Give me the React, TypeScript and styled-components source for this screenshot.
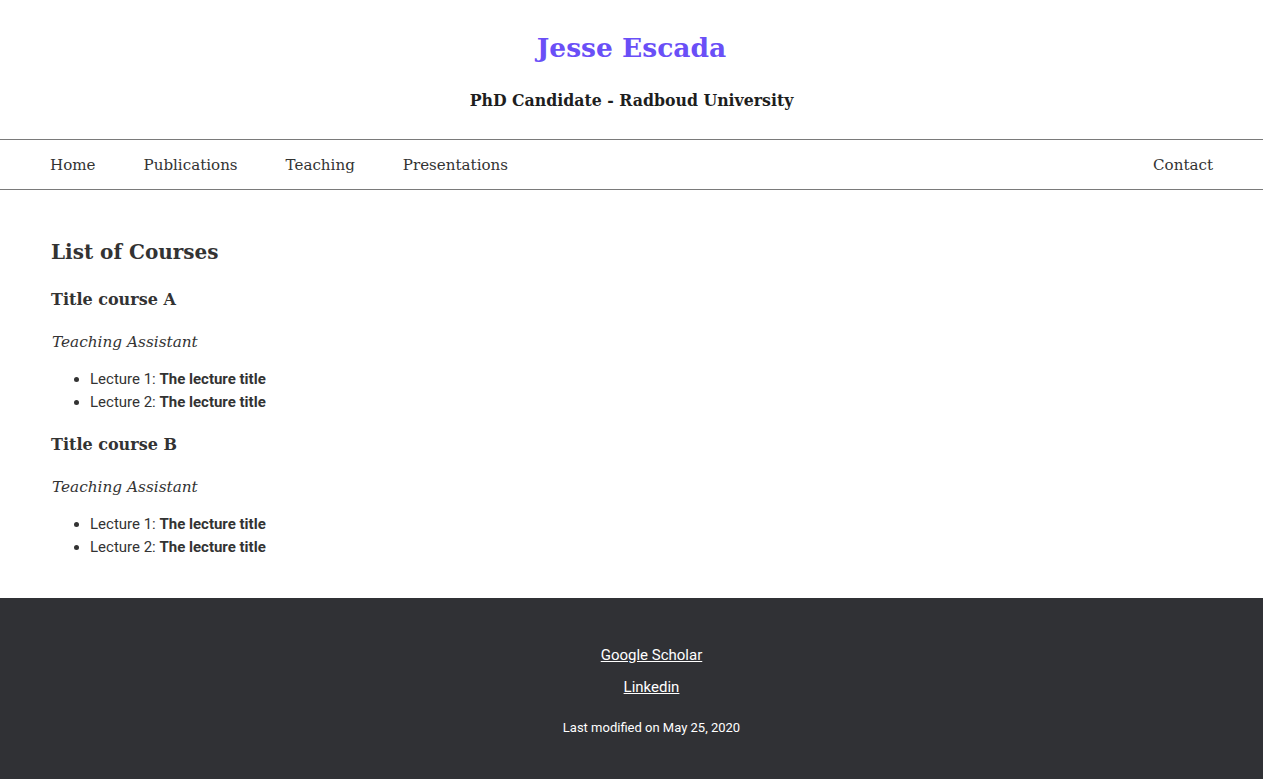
import React from "react";
import styled, { createGlobalStyle } from "styled-components";

const Global = createGlobalStyle`
  html, body { margin: 0; padding: 0; background: #fff; }
  body { font-family: Roboto, "Liberation Sans", sans-serif; color: #333; }
`;

const slab = `"DejaVu Serif", "Liberation Serif", serif`;

const Header = styled.header`
  display: flex;
  flex-direction: column;
  align-items: center;
  padding-top: 30px;
  padding-bottom: 26px;
`;

const Name = styled.h1`
  margin: 0;
  font-family: ${slab};
  font-weight: 700;
  font-size: 26.5px;
  line-height: 36px;
  color: #6a4ff7;
`;

const Subtitle = styled.h2`
  margin: 23px 0 0;
  font-family: ${slab};
  font-weight: 700;
  font-size: 15.75px;
  line-height: 24px;
  color: #1e1e1e;
`;

const Nav = styled.nav`
  display: flex;
  align-items: center;
  height: 49px;
  border-top: 1px solid #7a7a7a;
  border-bottom: 1px solid #7a7a7a;
  padding: 0 50px;
`;

const NavLink = styled.a`
  font-family: ${slab};
  font-size: 15.1px;
  color: #333;
  text-decoration: none;
  margin-right: 48px;
  &:last-child { margin-right: 0; margin-left: auto; }
`;

const Main = styled.main`
  padding: 48px 51px 19px;
`;

const PageTitle = styled.h2`
  margin: 0 0 23px;
  font-family: ${slab};
  font-weight: 700;
  font-size: 20px;
  line-height: 28px;
  color: #333;
`;

const CourseTitle = styled.h3`
  margin: 0 0 20px;
  font-family: ${slab};
  font-weight: 700;
  font-size: 16px;
  line-height: 22px;
  color: #333;
`;

const Role = styled.p`
  margin: 0 0 15px;
  padding-left: 1px;
  font-family: ${slab};
  font-style: italic;
  font-size: 15.3px;
  line-height: 22px;
  color: #333;
`;

const List = styled.ul`
  margin: 0 0 21px;
  padding-left: 39px;
  font-size: 15px;
  line-height: 22.5px;
  color: #333;
`;

const Footer = styled.footer`
  background: #303135;
  display: flex;
  flex-direction: column;
  align-items: center;
  padding: 47px 0 40px 40px;
  min-height: 181px;
  box-sizing: border-box;
`;

const FootLink = styled.a`
  font-size: 15px;
  line-height: 20px;
  color: #fff;
  text-decoration: underline;
  margin-bottom: 12px;
`;

const Modified = styled.p`
  margin: 10px 0 0;
  font-size: 13px;
  line-height: 18px;
  color: #fff;
`;

const courses = ["A", "B"];

export default function App() {
  return (
    <>
      <Global />
      <Header>
        <Name>Jesse Escada</Name>
        <Subtitle>PhD Candidate - Radboud University</Subtitle>
      </Header>
      <Nav>
        <NavLink href="#">Home</NavLink>
        <NavLink href="#">Publications</NavLink>
        <NavLink href="#">Teaching</NavLink>
        <NavLink href="#">Presentations</NavLink>
        <NavLink href="#">Contact</NavLink>
      </Nav>
      <Main>
        <PageTitle>List of Courses</PageTitle>
        {courses.map((c) => (
          <section key={c}>
            <CourseTitle>Title course {c}</CourseTitle>
            <Role>Teaching Assistant</Role>
            <List>
              <li>Lecture 1: <b>The lecture title</b></li>
              <li>Lecture 2: <b>The lecture title</b></li>
            </List>
          </section>
        ))}
      </Main>
      <Footer>
        <FootLink href="#">Google Scholar</FootLink>
        <FootLink href="#">Linkedin</FootLink>
        <Modified>Last modified on May 25, 2020</Modified>
      </Footer>
    </>
  );
}
